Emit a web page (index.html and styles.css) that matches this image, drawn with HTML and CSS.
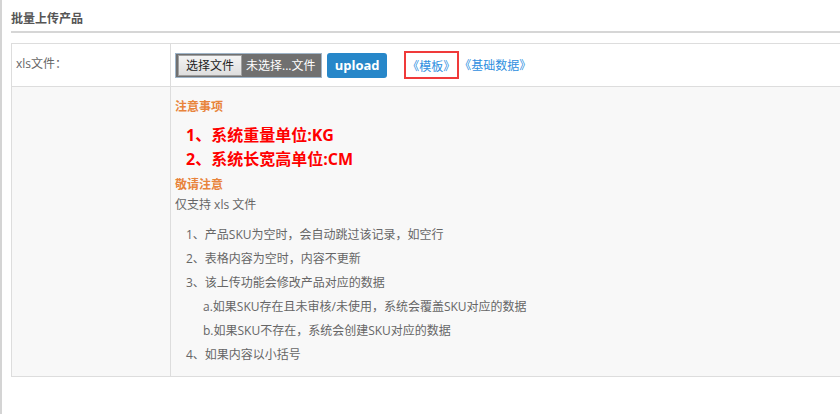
FILE: index.html
```html
<!DOCTYPE html>
<html lang="zh-CN">
<head>
    <meta charset="UTF-8">
    <title>批量上传产品</title>
    <link rel="stylesheet" href="styles.css">
</head>
<body>
    <div class="page">
        <h4 class="page-title">批量上传产品</h4>

        <table class="form-table">
            <tr class="row-file">
                <td class="label">xls文件：</td>
                <td class="field">
                    <span class="file-input">
                        <span class="file-btn">选择文件</span>
                        <span class="file-name">未选择...文件</span>
                    </span>
                    <button class="btn-upload">upload</button>
                    <span class="tpl-box"><a href="#" class="link">《模板》</a></span><a href="#" class="link">《基础数据》</a>
                </td>
            </tr>
            <tr class="row-notes">
                <td class="label"></td>
                <td class="field">
                    <p class="note-title">注意事项</p>
                    <div class="units">
                        <p class="unit">1、系统重量单位:KG</p>
                        <p class="unit">2、系统长宽高单位:CM</p>
                    </div>
                    <p class="note-title">敬请注意</p>
                    <p class="note-text">仅支持 xls 文件</p>
                    <ul class="rules">
                        <li>1、产品SKU为空时，会自动跳过该记录，如空行</li>
                        <li>2、表格内容为空时，内容不更新</li>
                        <li>3、该上传功能会修改产品对应的数据</li>
                        <li class="sub">a.如果SKU存在且未审核/未使用，系统会覆盖SKU对应的数据</li>
                        <li class="sub">b.如果SKU不存在，系统会创建SKU对应的数据</li>
                        <li>4、如果内容以小括号</li>
                    </ul>
                </td>
            </tr>
        </table>
    </div>
</body>
</html>
```

FILE: styles.css
```css
html, body {
    margin: 0;
    overflow: hidden;
}

body {
    font-family: "Open Sans", "Noto Sans CJK SC", sans-serif;
    font-size: 12px;
    color: #666;
    background: #fff;
}

.page {
    border-left: 2px solid #d4d4d4;
    padding-left: 9px;
    min-height: 414px;
    width: 1100px;
    box-sizing: border-box;
}

.page-title {
    margin: 0;
    padding-top: 10px;
    height: 21px;
    line-height: 18px;
    font-size: 12px;
    font-weight: bold;
    color: #555;
    border-bottom: 2px solid #d6d6d6;
}

.form-table {
    margin-top: 10px;
    width: 100%;
    border-collapse: collapse;
    border: 1px solid #ddd;
}

.form-table td {
    border: 1px solid #ddd;
    padding: 0 4px;
}

.form-table .label {
    width: 150px;
}

.row-file td {
    height: 43px;
    box-sizing: border-box;
    vertical-align: middle;
}

.row-file .label {
    vertical-align: top;
    padding-top: 11px;
    line-height: 17px;
}

.row-notes td {
    background: #f8f8f8;
    vertical-align: top;
}

.row-notes .field {
    padding-top: 11px;
    padding-bottom: 9px;
}

/* fake file input */
.file-input {
    display: inline-flex;
    align-items: center;
    vertical-align: middle;
    width: 147px;
    height: 25px;
    box-sizing: border-box;
    padding: 0 2px;
    background: #707070;
    border: 1px solid #9fb5c9;
}

.file-btn {
    display: inline-block;
    width: 64px;
    height: 21px;
    box-sizing: border-box;
    line-height: 19px;
    text-align: center;
    font-size: 12px;
    color: #222;
    background: linear-gradient(#f4f4f4, #dedede);
    border: 1px solid #a0a0a0;
}

.file-name {
    margin-left: 4px;
    color: #fff;
    white-space: nowrap;
}

.btn-upload {
    vertical-align: middle;
    margin-left: 2px;
    width: 60px;
    height: 25px;
    padding: 0;
    border: none;
    border-radius: 3px;
    background: #2787c9;
    color: #fff;
    font-family: "Open Sans", sans-serif;
    font-size: 13px;
    font-weight: bold;
    cursor: pointer;
}

.tpl-box {
    display: inline-block;
    vertical-align: middle;
    margin-left: 14px;
    height: 28px;
    line-height: 26px;
    padding: 0 2px 0 1px;
    box-sizing: border-box;
    border: 2px solid #f03a3a;
}

.link {
    color: #2f8fe0;
    text-decoration: none;
    vertical-align: middle;
}

.note-title {
    margin: 0;
    line-height: 18px;
    font-weight: bold;
    color: #e8843c;
}

.units {
    margin: 7px 0 5px 11px;
}

.unit {
    margin: 0;
    line-height: 24px;
    font-size: 16px;
    font-weight: bold;
    color: #ff0000;
}

.note-text {
    margin: 2px 0 0;
    line-height: 18px;
}

.rules {
    list-style: none;
    margin: 9px 0 0;
    padding: 0 0 0 11px;
}

.rules li {
    line-height: 24px;
}

.rules li.sub {
    padding-left: 17px;
}
```
